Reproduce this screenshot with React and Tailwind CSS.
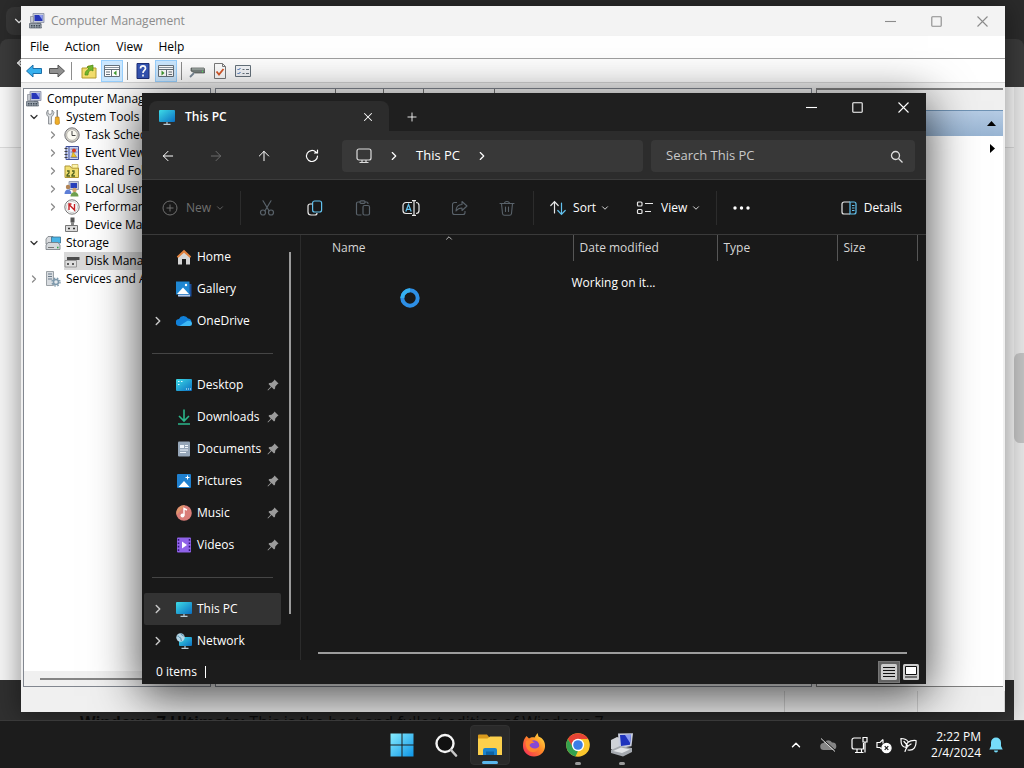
import React from "react";
import clsx from "clsx";
import {
  ArrowLeft,
  ArrowRight,
  ArrowUp,
  ChevronDown,
  ChevronRight,
  ChevronUp,
  Plus,
  X,
} from "lucide-react";

const treeItems = [
  { label: "Computer Management (Local)", icon: "computer", level: 0 },
  { label: "System Tools", icon: "tools", level: 1, state: "open" },
  { label: "Task Scheduler", icon: "clock", level: 2, state: "closed" },
  { label: "Event Viewer", icon: "event", level: 2, state: "closed" },
  { label: "Shared Folders", icon: "shared", level: 2, state: "closed" },
  { label: "Local Users and Groups", icon: "users", level: 2, state: "closed" },
  { label: "Performance", icon: "performance", level: 2, state: "closed" },
  { label: "Device Manager", icon: "device", level: 2 },
  { label: "Storage", icon: "storage", level: 1, state: "open" },
  { label: "Disk Management", icon: "disk", level: 2, selected: true },
  { label: "Services and Applications", icon: "services", level: 1, state: "closed" },
];

const navGroups = [
  [
    { label: "Home", icon: "home" },
    { label: "Gallery", icon: "gallery" },
    { label: "OneDrive", icon: "onedrive", expandable: true },
  ],
  [
    { label: "Desktop", icon: "desktop", pinned: true },
    { label: "Downloads", icon: "downloads", pinned: true },
    { label: "Documents", icon: "documents", pinned: true },
    { label: "Pictures", icon: "pictures", pinned: true },
    { label: "Music", icon: "music", pinned: true },
    { label: "Videos", icon: "videos", pinned: true },
  ],
  [
    { label: "This PC", icon: "pc", expandable: true, selected: true },
    { label: "Network", icon: "network", expandable: true },
  ],
];

const App = () => (
  <div className="flex flex-col h-screen overflow-hidden bg-[#1c1c1c] font-['Open_Sans','Noto_Sans',sans-serif] text-xs select-none">
    <main className="relative flex-1 min-h-0 overflow-hidden">
      <BrowserBackdrop />
      <ManagementWindow />
      <ExplorerWindow />
    </main>
    <Taskbar />
  </div>
);

// browser left open behind the two windows
const BrowserBackdrop = () => (
  <div className="flex flex-col h-full bg-[#2b2b2b]">
    <div className="flex items-end h-[39px] shrink-0 pb-1">
      <button aria-label="Search tabs" className="flex items-center justify-end w-8 h-7 ml-1.5 pr-3 rounded-lg bg-[#383838] text-white">
        <ChevronDown size={14} />
      </button>
    </div>
    <div className="flex items-center h-12 shrink-0 px-2 rounded-t-lg bg-[#3b3b3b] text-white">
      <ArrowLeft size={18} className="ml-1.5" />
    </div>
    <div className="flex flex-1 min-h-0">
      <div className="flex flex-col flex-1 min-w-0">
        <div className="h-[61px] shrink-0 bg-[#fbfbfb] border-b border-[#dddddd]" />
        <div className="flex-1 bg-[#f6f6f6]" />
        <div className="h-10 shrink-0 pt-[30px] pl-20 overflow-hidden bg-[#303030] text-[#0c0c0c] text-base whitespace-nowrap">
          <b>Windows 7 Ultimate:</b> This is the best and fullest edition of Windows 7
        </div>
      </div>
      <div className="w-2.5 pt-[266px] bg-[#e9e9e9]">
        <div className="h-[90px] rounded-l-md bg-[#c4c4c4]" />
      </div>
    </div>
  </div>
);

const WindowButtons = ({ size }) => (
  <div className="flex">
    {["Minimize", "Maximize", "Close"].map((name) => (
      <button key={name} aria-label={name} className={clsx("flex items-center justify-center w-[46px]", size)}>
        <svg width="11" height="11" viewBox="0 0 11 11" fill="none" stroke="currentColor" strokeWidth="1.1">
          {name === "Minimize" && <path d="M0 5.5h11" />}
          {name === "Maximize" && <rect x=".8" y=".8" width="9.4" height="9.4" rx=".8" />}
          {name === "Close" && <path d="M.5.5l10 10M10.5.5l-10 10" />}
        </svg>
      </button>
    ))}
  </div>
);

const ManagementWindow = () => (
  <section
    aria-label="Computer Management"
    className="absolute left-[21px] right-[19px] top-1.5 bottom-2 flex flex-col bg-[#f0f0f0] text-black shadow-[0_2px_24px_2px_#00000066] overflow-hidden"
  >
    <header className="flex items-center justify-between h-[30px] shrink-0 bg-[#f3f3f3] text-[#8b8b8b]">
      <div className="flex items-center gap-1.5 pl-2">
        <TreeIcon name="computer" />
        <h1>Computer Management</h1>
      </div>
      <WindowButtons size="h-[30px]" />
    </header>

    <nav className="flex h-[23px] shrink-0 pb-px pl-px bg-white border-b border-[#a0a0a0]">
      {["File", "Action", "View", "Help"].map((item) => (
        <button key={item} className="px-2">{item}</button>
      ))}
    </nav>

    <div className="flex items-center h-6 shrink-0 px-1 gap-1.5 bg-white border-b border-[#d5d5d5]">
      <ToolButton name="back" />
      <ToolButton name="forward" />
      <span className="w-px h-[18px] mr-0.5 bg-[#8d8d8d]" />
      <ToolButton name="folder" />
      <ToolButton name="treePane" active />
      <span className="w-px h-[18px] bg-[#8d8d8d]" />
      <ToolButton name="help" />
      <ToolButton name="actionPane" active />
      <span className="w-px h-[18px] bg-[#8d8d8d]" />
      <ToolButton name="drive" />
      <ToolButton name="check" />
      <ToolButton name="list" />
    </div>

    <div className="flex flex-1 min-h-0 pt-[5px] px-0.5 gap-1">
      <div className="flex flex-col w-[188px] shrink-0 bg-white border border-[#828790] overflow-hidden">
        <ul className="flex-1 pt-px">
          {treeItems.map((item) => (
            <TreeRow key={item.label} item={item} />
          ))}
        </ul>
        <div className="flex items-center h-[15px] pl-4 bg-[#f0f0f0]">
          <div className="flex-1 h-0.5 bg-[#858585]" />
        </div>
      </div>

      <div className="flex flex-col flex-1 min-w-0 bg-white border border-[#828790]">
        <div className="flex h-6 shrink-0 bg-[#f7f7f7]">
          <span className="w-[120px] border-r border-[#777777]" />
          <span className="w-12 border-r border-[#777777]" />
          <span className="w-10 border-r border-[#777777]" />
          <span className="w-[71px] border-r border-[#777777]" />
        </div>
      </div>

      <div className="flex flex-col w-[187px] shrink-0 bg-white border-t-2 border-l border-b border-[#828282]">
        <div className="h-5 shrink-0 bg-[#f0f0f0]" />
        <div className="flex items-center justify-end h-[26px] shrink-0 pr-[7px] border-t border-[#6f93b5] bg-linear-to-b from-[#b5cbe4] to-[#98b4d2]">
          <svg width="9" height="5" viewBox="0 0 9 5"><path d="M0 5L4.500 0 9 5z" /></svg>
        </div>
        <div className="flex items-center justify-end h-6 pr-2">
          <svg width="5" height="9" viewBox="0 0 5 9"><path d="M0 0l5 4.500L0 9z" /></svg>
        </div>
      </div>
    </div>

    <footer className="flex justify-end h-[25px] shrink-0 pt-1">
      <span className="w-[133px] border-l border-[#d0d0d0]" />
      <span className="w-[88px] border-x border-[#d0d0d0]" />
    </footer>
  </section>
);

const ToolButton = ({ name, active }) => (
  <button
    aria-label={name}
    className={clsx(
      "flex items-center justify-center h-[22px] shrink-0",
      active ? "w-[22px] -mx-0.5 bg-[#cce8ff] border border-[#99d1ff]" : "w-[17px]"
    )}
  >
    <ToolIcon name={name} />
  </button>
);

const ToolIcon = ({ name }) => (
  <svg width="16" height="16" viewBox="0 0 16 16" fill="none" className="shrink-0">
    {name === "back" && <path d="M.5 8L7 2v3.500h8.500v5H7V14z" fill="#36b0ee" stroke="#1d6fa8" />}
    {name === "forward" && <path d="M15.500 8L9 2v3.500H.5v5H9V14z" fill="#8f8f8f" stroke="#555" />}
    {name === "folder" && (
      <>
        <path d="M1 5h5l1-2h4l1 2h3v10H1z" fill="#f2dc6b" stroke="#b49a2d" />
        <path d="M4 12c0-4 2-5 4-6L6 4l6-2v6l-2-1c-2 1-3 2-3 5z" fill="#73b62c" stroke="#4b8a18" strokeWidth=".7" />
      </>
    )}
    {(name === "treePane" || name === "actionPane") && (
      <>
        <path d="M.5 2.500h15v11H.5z" fill="#fff" stroke="#66727c" />
        <path d="M1 4.500h14" stroke="#8a96a0" />
        <path d="M.5 6.500h15" stroke="#66727c" />
        {name === "treePane" ? (
          <>
            <path d="M7.500 7v6.500M2 9h4M2 11.500h4" stroke="#66727c" />
            <path d="M12.500 7.500v5L9.500 10z" fill="#3f9b2f" />
          </>
        ) : (
          <>
            <path d="M8.500 7v6.500M10.500 9H14M10.500 11.500H14" stroke="#66727c" />
            <path d="M3.500 7.500v5l3-2.500z" fill="#3f9b2f" />
          </>
        )}
      </>
    )}
    {name === "help" && (
      <>
        <path d="M2 .5h12v15H2z" fill="#3454b4" stroke="#1d2f78" />
        <path d="M5.500 5.500c0-3.500 5-3.500 5 0 0 2-2.500 2-2.500 4.500M8 11.500v2" stroke="#fff" strokeWidth="1.700" />
      </>
    )}
    {name === "drive" && (
      <>
        <path d="M2 5h13l.5 1v4H6L2 8z" fill="#78827f" stroke="#4a504e" strokeWidth=".7" />
        <path d="M3 5.500h12v1H3z" fill="#b7c0bd" />
        <path d="M13 8.500h1" stroke="#5bea62" strokeWidth="1.500" />
        <path d="M1 14l4-4" stroke="#7b8a99" strokeWidth="1.800" />
      </>
    )}
    {name === "check" && (
      <>
        <path d="M2.500.5h8l3 3v12h-11z" fill="#fff" stroke="#7b7b7b" />
        <path d="M10.500.5v3h3" stroke="#7b7b7b" />
        <path d="M4.500 8.500L7 11.500 11.500 6" stroke="#d8592a" strokeWidth="1.800" />
      </>
    )}
    {name === "list" && (
      <>
        <path d="M.5 2.500h15v11H.5z" fill="#f5f7fa" stroke="#66727c" />
        <path d="M2.500 6l1 1 2-2M2.500 10l1 1 2-2" stroke="#3a67b0" />
        <path d="M7.500 6.500h2M11 6.500h3M7.500 10.500h2M11 10.500h3" stroke="#66727c" />
      </>
    )}
  </svg>
);

const TreeRow = ({ item }) => (
  <li
    className={clsx(
      "flex items-center h-[18px] whitespace-nowrap",
      item.level === 0 && "pl-0.5",
      item.level === 1 && "pl-px",
      item.level === 2 && "pl-5"
    )}
  >
    {item.level > 0 && (
      <span className="flex justify-center w-5 shrink-0 pr-0.5">
        {item.state === "open" && <ChevronDown size={12} strokeWidth={2.5} className="text-[#333333]" />}
        {item.state === "closed" && <ChevronRight size={12} strokeWidth={2.5} className="text-[#8a8a8a]" />}
      </span>
    )}
    <span className={clsx("flex items-center gap-[5px] h-full", item.selected && "flex-1 bg-[#d9d9d9]")}>
      <TreeIcon name={item.icon} />
      {item.label}
    </span>
  </li>
);

const TreeIcon = ({ name }) => (
  <svg width="16" height="16" viewBox="0 0 16 16" fill="none" className="shrink-0">
    {name === "computer" && (
      <>
        <path d="M4 .5h11v9H4z" fill="#c6cbda" stroke="#868da5" strokeWidth=".8" />
        <path d="M5.500 2h8v6h-8z" fill="#2636b9" />
        <path d="M10 2h3.500v5z" fill="#8f9df0" />
        <path d="M8 9.500h4l1 3H8z" fill="#8b919c" />
        <path d="M1.500 3.500h3v6h-3z" fill="#c4c8cf" stroke="#858a93" strokeWidth=".7" />
        <path d="M.5 10.500h11l1 4.500H.5z" fill="#9aa3ad" stroke="#56606b" strokeWidth=".7" />
        <path d="M2 12.500h9M2 14h9" stroke="#3f4a55" strokeDasharray="1.500 1" />
      </>
    )}
    {name === "tools" && (
      <>
        <path d="M3 1v3.500l2 1 2-1V1l2 2.500-1 3-1.500 1V15h-3V7.500L2 6.500l-.5-3z" fill="#d7dadd" stroke="#7b8085" strokeWidth=".8" />
        <path d="M11.500 1h1.500v7h-1.500z" fill="#888" />
        <path d="M10.500 8h3.500l.5 6c0 2-4.500 2-4.500 0z" fill="#eeae28" stroke="#b47614" strokeWidth=".6" />
      </>
    )}
    {name === "clock" && (
      <>
        <circle cx="8" cy="8" r="7.200" fill="#d3d1ca" stroke="#77767a" />
        <circle cx="8" cy="8" r="5.300" fill="#fbfaf2" stroke="#a5a29a" strokeWidth=".6" />
        <path d="M8 4v4.500h3.500" stroke="#444" />
      </>
    )}
    {name === "event" && (
      <>
        <path d="M2 1.500h12.500v13H2z" fill="#cbd3ee" stroke="#40509c" />
        <path d="M5 1.500v13" stroke="#40509c" />
        <path d="M6.500 4h7M6.500 7h7M6.500 12.500h7" stroke="#7687c8" />
        <path d="M.5 3.500h3M.5 6.500h3M.5 9.500h3M.5 12.500h3" stroke="#444" />
        <circle cx="10" cy="5.500" r="2" fill="#d4391f" />
        <path d="M9 7l3.500 5h-5z" fill="#efc62c" stroke="#a98610" strokeWidth=".5" />
      </>
    )}
    {name === "shared" && (
      <>
        <path d="M1 3h5l1.500 2H14.500v9.500H1z" fill="#f1df72" stroke="#ae9636" />
        <path d="M8 1.500h6V5H8z" fill="#fff6a8" stroke="#ae9636" strokeWidth=".6" />
        <path d="M3 8h2v2l-2 2v1h3M8 8h2v2l-2 2v1h3" stroke="#4f6220" strokeWidth="1.300" />
      </>
    )}
    {name === "users" && (
      <>
        <path d="M5 .5h9.500v8H5z" fill="#c6cbda" stroke="#868da5" strokeWidth=".8" />
        <path d="M6.500 2h6.500v5H6.500z" fill="#2840bb" />
        <circle cx="4" cy="6" r="2.200" fill="#b28455" />
        <path d="M.5 13c0-6 7-6 7 0z" fill="#5d7ed6" />
        <circle cx="10.500" cy="9" r="2.200" fill="#d0a26e" />
        <path d="M6.500 15.500c0-6 8-6 8 0z" fill="#6fa04e" />
      </>
    )}
    {name === "performance" && (
      <>
        <circle cx="8" cy="8" r="7.200" fill="#fff" stroke="#777" />
        <circle cx="8" cy="8" r="5.500" stroke="#b8b8b8" strokeWidth=".7" />
        <path d="M5 11V5.500l5.500 5.500V5M4.500 5l3 0" stroke="#c42227" strokeWidth="1.400" />
      </>
    )}
    {name === "device" && (
      <>
        <path d="M6.500.5h4v5h-4z" fill="#555" />
        <path d="M8.500 5v4" stroke="#888" strokeWidth="3" />
        <path d="M1.500 8.500h12v6h-12z" fill="#ddd" stroke="#777" />
        <path d="M4 11.500h2M9 11.500h2" stroke="#333" strokeWidth="1.700" />
      </>
    )}
    {name === "storage" && (
      <>
        <path d="M1 4l2-2.500h5L9 4v5H1z" fill="#d8dadd" stroke="#777d84" strokeWidth=".8" />
        <path d="M6.500 2h9v6h-9z" fill="#48b4e6" stroke="#3a6e8e" strokeWidth=".8" />
        <path d="M1 10l2-2.500h10l2 2.500v4.500H1z" fill="#d3d7da" stroke="#71777e" strokeWidth=".8" />
        <path d="M3 12.500h6" stroke="#777" />
        <path d="M12 12.500h1.500" stroke="#2ba342" strokeWidth="1.500" />
      </>
    )}
    {name === "disk" && (
      <>
        <path d="M3 4h12.500v3H3z" fill="#4c4c4c" />
        <path d="M1 7.500h11.500v6.500H1z" fill="#dedede" stroke="#888" strokeWidth=".8" />
        <path d="M3 11h2M8 11h2" stroke="#333" strokeWidth="1.700" />
      </>
    )}
    {name === "services" && (
      <>
        <path d="M1.500.5h7v14h-7z" fill="#d8dce0" stroke="#878d93" strokeWidth=".8" />
        <path d="M3 3h4M3 5.500h4M3 8h4" stroke="#6a7a8a" />
        <circle cx="11" cy="11" r="2.500" fill="#e4e9ed" stroke="#7c98ab" strokeWidth="1.500" />
        <circle cx="11" cy="11" r="4" stroke="#7c98ab" strokeWidth="1.300" strokeDasharray="1.600 1.600" />
      </>
    )}
  </svg>
);

const ExplorerWindow = () => (
  <section
    aria-label="This PC"
    className="absolute z-10 left-[142px] right-[98px] top-[93px] bottom-9 flex flex-col bg-[#191919] text-white shadow-[0_10px_44px_2px_#000000b3]"
  >
    <header className="flex h-[38px] shrink-0 bg-[#1f1f1f]">
      <div className="flex items-center justify-between w-[240px] mt-2 ml-[7px] pt-0.5 pl-2.5 pr-3.5 rounded-t-lg bg-[#2c2c2c]">
        <div className="flex items-center gap-2.5 font-semibold">
          <PlaceIcon name="pc" />
          <h2>This PC</h2>
        </div>
        <button aria-label="Close tab"><X size={14} strokeWidth={1.75} /></button>
      </div>
      <button aria-label="New tab" className="px-4 pt-2.5"><Plus size={14} strokeWidth={1.5} /></button>
      <div className="flex-1" />
      <WindowButtons size="h-7" />
    </header>

    <div className="flex items-center h-[49px] shrink-0 pt-0.5 pl-0.5 pr-[11px] bg-[#2c2c2c] border-b border-[#3c3c3c]">
      <NavButton label="Back"><ArrowLeft size={16} strokeWidth={1.5} /></NavButton>
      <NavButton label="Forward" disabled><ArrowRight size={16} strokeWidth={1.5} /></NavButton>
      <NavButton label="Up"><ArrowUp size={16} strokeWidth={1.5} /></NavButton>
      <NavButton label="Refresh">
        <svg width="16" height="16" viewBox="0 0 16 16" fill="none" stroke="currentColor" strokeWidth="1.200" strokeLinecap="round">
          <path d="M13.500 8a5.500 5.500 0 1 1-1.700-4L13.500 5M13.500 2v3H10.500" />
        </svg>
      </NavButton>
      <div className="flex items-center flex-1 h-8 ml-1.5 mr-2 pl-3.5 rounded bg-[#383838] text-[13px]">
        <svg width="16" height="16" viewBox="0 0 16 16" fill="none" stroke="#dddddd" strokeWidth="1.200">
          <rect x="1" y="1" width="14" height="11" rx="2" />
          <path d="M3.500 14.500h9M6 12v2.500M10 12v2.500" />
        </svg>
        <ChevronRight size={14} className="mx-[15px]" />
        <a href="#this-pc">This PC</a>
        <ChevronRight size={14} className="ml-[15px]" />
      </div>
      <label className="flex items-center w-[264px] h-8 pl-[15px] pr-3 rounded bg-[#383838] text-[13px]">
        <input
          type="search"
          aria-label="Search This PC"
          placeholder="Search This PC"
          className="flex-1 min-w-0 bg-transparent outline-none placeholder:text-[#c8c8c8]"
        />
        <svg width="13" height="13" viewBox="0 0 13 13" fill="none" stroke="#dddddd" strokeWidth="1.300">
          <circle cx="5.500" cy="5.500" r="4" />
          <path d="M8.500 8.500l4 4" />
        </svg>
      </label>
    </div>

    <CommandBar />

    <div className="flex flex-1 min-h-0">
      <NavigationPane />
      <FileList />
    </div>

    <footer className="flex items-center justify-between h-6 shrink-0 pl-3.5 pr-1 bg-[#1c1c1c]">
      <div className="flex items-center gap-2">
        <span>0 items</span>
        <span className="w-px h-3 bg-white" />
      </div>
      <div className="flex items-center">
        <button aria-label="Details view" className="flex items-center justify-center w-[22px] h-[22px] bg-[#636363] border border-[#777777]">
          <svg width="16" height="16" viewBox="0 0 16 16" className="shrink-0">
            <rect width="16" height="16" rx="1.500" fill="#cdcdcd" />
            <path d="M2 3.500h12M2 6.500h12M2 9.500h12M2 12.500h12" stroke="#111" />
          </svg>
        </button>
        <button aria-label="Large thumbnails" className="flex items-center justify-center w-[22px] h-[22px]">
          <svg width="16" height="16" viewBox="0 0 16 16" className="shrink-0">
            <rect width="16" height="16" rx="1.500" fill="#cdcdcd" />
            <path d="M2.500 2.500h11v8h-11z" fill="#fff" stroke="#111" />
            <path d="M2 13h12" stroke="#111" />
          </svg>
        </button>
      </div>
    </footer>
  </section>
);

const NavButton = ({ label, disabled, children }) => (
  <button
    aria-label={label}
    disabled={disabled}
    className={clsx("flex items-center justify-center w-12 h-8", disabled && "text-[#6b6b6b]")}
  >
    {children}
  </button>
);

const CommandBar = () => (
  <div className="flex items-center h-[55px] shrink-0 pt-0.5 px-1.5 border-b border-[#3a3a3a]">
    <button disabled className="flex items-center h-8 pl-3.5 text-[#6f6f6f]">
      <svg width="16" height="16" viewBox="0 0 16 16" fill="none" stroke="currentColor">
        <circle cx="8" cy="8" r="7" />
        <path d="M8 4.500v7M4.500 8h7" />
      </svg>
      <span className="ml-2 mr-1">New</span>
      <ChevronDown size={10} />
    </button>
    <Divider className="ml-[15px]" />
    <CommandIcon label="Cut" disabled>
      <svg width="16" height="16" viewBox="0 0 16 16" fill="none" stroke="currentColor" strokeWidth="1.200" strokeLinecap="round">
        <path d="M4 .8l6 10M12 .8l-6 10" />
        <circle cx="4" cy="12.500" r="2.500" />
        <circle cx="12" cy="12.500" r="2.500" />
      </svg>
    </CommandIcon>
    <CommandIcon label="Copy">
      <svg width="16" height="16" viewBox="0 0 16 16" fill="none" strokeWidth="1.200">
        <path d="M5 4H3a2 2 0 0 0-2 2v6a3 3 0 0 0 3 3h4a2 2 0 0 0 2-2" stroke="#e8e8e8" />
        <rect x="5.600" y="1" width="9" height="11" rx="2" stroke="#62c1ee" />
      </svg>
    </CommandIcon>
    <CommandIcon label="Paste" disabled>
      <svg width="16" height="16" viewBox="0 0 16 16" fill="none" stroke="currentColor" strokeWidth="1.200">
        <path d="M5 2H3a1.500 1.500 0 0 0-1.500 1.500v10A1.500 1.500 0 0 0 3 15h3.500M10 2h1.500A1.500 1.500 0 0 1 13 3.500V4" />
        <rect x="5" y=".8" width="5" height="2.500" rx="1" />
        <rect x="8" y="5.500" width="6.500" height="9.500" rx="1.500" />
      </svg>
    </CommandIcon>
    <CommandIcon label="Rename">
      <svg width="18" height="16" viewBox="0 0 18 16" fill="none" strokeWidth="1.200">
        <path d="M10 2.500H4a3 3 0 0 0-3 3v5a3 3 0 0 0 3 3h6M14 2.500a3 3 0 0 1 3 3v5a3 3 0 0 1-3 3M10 .7h4M12 .7v14.600M10 15.300h4" stroke="#e8e8e8" />
        <path d="M3.800 11.500L6.500 4.500l2.700 7M4.800 9.300h3.500" stroke="#62c1ee" />
      </svg>
    </CommandIcon>
    <CommandIcon label="Share" disabled>
      <svg width="17" height="16" viewBox="0 0 17 16" fill="none" stroke="currentColor" strokeWidth="1.100" strokeLinejoin="round">
        <path d="M6 2.500H3.500a2 2 0 0 0-2 2v8a2 2 0 0 0 2 2h8.500a2 2 0 0 0 2-2V11" />
        <path d="M11 1.500l5 4.500-5 4.500V8C8 8 6.500 9 5 11c0-4 2-6.500 6-6.500z" />
      </svg>
    </CommandIcon>
    <CommandIcon label="Delete" disabled>
      <svg width="16" height="16" viewBox="0 0 16 16" fill="none" stroke="currentColor" strokeWidth="1.100" strokeLinecap="round">
        <path d="M1 3.500h14M5.500 3.500a2.500 2 0 0 1 5 0M2.500 3.500l1 10a2 2 0 0 0 2 1.700h5a2 2 0 0 0 2-1.700l1-10M6.500 7v4.500M9.500 7v4.500" />
      </svg>
    </CommandIcon>
    <Divider className="ml-1" />
    <button className="flex items-center h-8 ml-4">
      <svg width="16" height="16" viewBox="0 0 16 16" fill="none" strokeWidth="1.200" strokeLinecap="round">
        <path d="M4.500 13V2M.8 5.500L4.500 1.700l3.700 3.800" stroke="#e8e8e8" />
        <path d="M11.500 3v11M7.800 10.500l3.700 3.800 3.700-3.800" stroke="#62c1ee" />
      </svg>
      <span className="ml-[7px] mr-1">Sort</span>
      <ChevronDown size={10} />
    </button>
    <button className="flex items-center h-8 ml-[26px]">
      <svg width="18" height="16" viewBox="0 0 18 16" fill="none" stroke="#e8e8e8" strokeWidth="1.200">
        <rect x="1.500" y="2" width="4.500" height="4" rx="1" />
        <rect x="1.500" y="9.500" width="4.500" height="4" rx="1" />
        <path d="M9 3.500h8M9 11.500h6" />
      </svg>
      <span className="ml-[7px] mr-1">View</span>
      <ChevronDown size={10} />
    </button>
    <Divider className="ml-[15px]" />
    <button aria-label="See more" className="flex items-center justify-center w-12 h-8">
      <svg width="17" height="4" viewBox="0 0 17 4" fill="currentColor">
        <circle cx="2" cy="2" r="1.700" />
        <circle cx="8.500" cy="2" r="1.700" />
        <circle cx="15" cy="2" r="1.700" />
      </svg>
    </button>
    <button className="flex items-center gap-[7px] h-8 ml-auto pr-[18px]">
      <svg width="16" height="14" viewBox="0 0 16 14" fill="none" strokeWidth="1.200">
        <path d="M9 1H3a2 2 0 0 0-2 2v8a2 2 0 0 0 2 2h6" stroke="#e8e8e8" />
        <path d="M9 1h4a2 2 0 0 1 2 2v8a2 2 0 0 1-2 2H9zM11 4.500h2.500M11 7h2.500M11 9.500h2.500" stroke="#62c1ee" />
      </svg>
      Details
    </button>
  </div>
);

const CommandIcon = ({ label, disabled, children }) => (
  <button
    aria-label={label}
    disabled={disabled}
    className={clsx("flex items-center justify-center w-12 h-8 pl-1", disabled && "text-[#59626a]")}
  >
    {children}
  </button>
);

const Divider = ({ className }) => <span className={clsx("w-px h-[34px] bg-[#2c2c2c]", className)} />;

const NavigationPane = () => (
  <aside className="flex w-[159px] shrink-0 border-r border-[#2b2b2b]">
    <nav className="flex-1 pt-1.5 pl-0.5">
      {navGroups.map((group, i) => (
        <React.Fragment key={i}>
          {i > 0 && (
            <div className="flex items-center h-8 pl-2 pr-2">
              <hr className="flex-1 border-[#454545]" />
            </div>
          )}
          <ul>
            {group.map((item) => (
              <li key={item.label}>
                <a
                  href={`#${item.label}`}
                  className={clsx("flex items-center h-8 pr-0.5 rounded-xs", item.selected && "bg-[#333333]")}
                >
                  <span className="w-8 pl-[7px]">
                    {item.expandable && <ChevronRight size={14} strokeWidth={2.5} className="text-[#c8c8c8]" />}
                  </span>
                  <PlaceIcon name={item.icon} />
                  <span className="flex-1 pl-[5px]">{item.label}</span>
                  {item.pinned && <PinIcon />}
                </a>
              </li>
            ))}
          </ul>
        </React.Fragment>
      ))}
    </nav>
    <div className="w-[19px] pl-2 pt-[17px]">
      <div className="w-0.5 h-[362px] bg-[#9b9b9b]" />
    </div>
  </aside>
);

const PinIcon = () => (
  <svg width="12" height="12" viewBox="0 0 12 12" fill="#9b9b9b" className="shrink-0">
    <path d="M7.500.5l4 4-1.200.8-2 2.200-.3 2.200-1 .8-2.400-2.400L1 11.500l-.5-.5 3.300-3.600L1.500 5l.8-1 2.300-.3 2.200-2z" />
  </svg>
);

const PlaceIcon = ({ name }) => (
  <svg width="16" height="16" viewBox="0 0 16 16" fill="none" className="shrink-0">
    <defs>
      <linearGradient id="screen" x1="0" y1="0" x2="1" y2="1">
        <stop offset="0" stopColor="#3ddbe6" />
        <stop offset="1" stopColor="#0b6fc2" />
      </linearGradient>
    </defs>
    {name === "home" && (
      <>
        <path d="M2 7l6-5 6 5v8.500h-4V10H6v5.500H2z" fill="#d5d5d5" />
        <path d="M8 .8L.8 7.500 2 9l6-5.300L14 9l1.200-1.500z" fill="#e0803c" />
      </>
    )}
    {name === "gallery" && (
      <>
        <path d="M3 3h12.500v12.500H3z" fill="#1b4f9c" />
        <path d="M2 13.500h12v2H2z" fill="#b6cbe8" />
        <path d="M0 .5h13.500v13H0z" fill="#1f87d2" />
        <path d="M1 13l6-6.500 6 6.500z" fill="#fff" />
        <circle cx="10" cy="4" r="1.200" fill="#fff" />
      </>
    )}
    {name === "onedrive" && (
      <>
        <path d="M3.500 13a3.500 3.500 0 0 1-.5-7A5 5 0 0 1 12 5.500a3.800 3.800 0 0 1 .5 7.500z" fill="#1180d8" />
        <path d="M3.500 13L11 8c2.500-1 5 .5 5 2.500A2.500 2.500 0 0 1 13.500 13z" fill="#3db8f5" />
      </>
    )}
    {name === "desktop" && (
      <>
        <rect y="2" width="16" height="12" rx="1" fill="url(#screen)" />
        <path d="M2 4.500h1.500M2 7.500h1.500M5 4.500h1.500M10 12h1M12 12h1M14 12h1" stroke="#e3fbff" />
      </>
    )}
    {name === "downloads" && <path d="M8 .5v11M3 7l5 5 5-5M2 15h12" stroke="#2bb58a" strokeWidth="1.600" />}
    {name === "documents" && (
      <>
        <rect x="2" y=".5" width="12" height="15" rx="1" fill="#96a6b8" />
        <path d="M4 4h4v3H4z" fill="#eef4fa" />
        <path d="M9 4.500h3M9 6.500h3M4 9h8M4 11.500h6" stroke="#eef4fa" />
      </>
    )}
    {name === "pictures" && (
      <>
        <rect x="1" y="1" width="14" height="14" rx="1" fill="#1f80cf" />
        <path d="M2.500 14L8 8l5.500 6z" fill="#fff" />
        <path d="M11.500 2.500v4M9.500 4.500h4" stroke="#fff" />
      </>
    )}
    {name === "music" && (
      <>
        <circle cx="8" cy="8" r="7.800" fill="#d97d78" />
        <path d="M.6 10A7.800 7.800 0 0 1 9 .3z" fill="#e0956c" />
        <circle cx="6.500" cy="10.500" r="2" fill="#fff" />
        <path d="M8 10.500V3.500l3 1.500" stroke="#fff" strokeWidth="1.400" />
      </>
    )}
    {name === "videos" && (
      <>
        <rect x="1" y=".5" width="14" height="15" rx="1" fill="#8f62e8" />
        <path d="M2.500 2v13M13.500 2v13" stroke="#331478" strokeWidth="1.500" strokeDasharray="1.700 1.700" />
        <path d="M6 4.500v7L11 8z" fill="#fff" />
      </>
    )}
    {name === "pc" && (
      <>
        <rect y="1" width="16" height="12" rx="1" fill="url(#screen)" />
        <path d="M8 13v2M4.500 15.300h7" stroke="#b9cbd6" strokeWidth="1.200" />
      </>
    )}
    {name === "network" && (
      <>
        <rect x="3" y="4" width="13" height="9" rx="1" fill="url(#screen)" />
        <path d="M9 13v2M5.500 15.300h7" stroke="#b9cbd6" strokeWidth="1.200" />
        <circle cx="4.500" cy="4.500" r="4.200" fill="#b5d6e6" />
        <path d="M1.500 3c2 0 2 2 3 2s0 2 1 3M5 .5c0 2 2 1 3 3" stroke="#4b87a4" />
      </>
    )}
  </svg>
);

const FileList = () => (
  <div className="flex flex-col flex-1 min-w-0">
    <table className="w-full table-fixed text-left text-[#d6d6d6]">
      <thead>
        <tr className="h-[26px]">
          <th className="relative pl-[31px] font-normal border-r border-[#565656]">
            Name
            <ChevronUp size={10} className="absolute top-[-2px] left-[143px]" />
          </th>
          <th className="w-36 pl-1.5 font-normal border-r border-[#565656]">Date modified</th>
          <th className="w-[120px] pl-1.5 font-normal border-r border-[#565656]">Type</th>
          <th className="w-20 pl-1.5 font-normal border-r border-[#565656]">Size</th>
          <th className="w-[9px]" aria-label="Spacer" />
        </tr>
      </thead>
    </table>
    <div className="flex-1 pt-3.5 text-center">
      <p>Working on it...</p>
      <svg width="20" height="20" viewBox="0 0 20 20" fill="none" className="ml-[99px] -mt-[3px]">
        <circle cx="10" cy="10" r="7.700" stroke="#2d8fe6" strokeWidth="4" />
        <path d="M2.300 10A7.700 7.700 0 0 1 10 2.300" stroke="#35b0f0" strokeWidth="4" />
      </svg>
    </div>
    <div className="h-0.5 ml-[17px] mr-[19px] mb-1.5 bg-[#9b9b9b]" />
  </div>
);

const Taskbar = () => (
  <footer className="grid grid-cols-[1fr_auto_1fr] items-center h-12 shrink-0 border-t border-[#393939] bg-[#1c1c1c] text-white">
    <span />
    <div className="flex gap-1">
      {["start", "search", "explorer", "firefox", "chrome", "management"].map((name) => (
        <button
          key={name}
          aria-label={name}
          className={clsx(
            "relative flex items-center justify-center w-10 h-10 rounded",
            name === "explorer" && "bg-[#2a2a2a] border border-[#313131]"
          )}
        >
          <TaskIcon name={name} />
          {name === "explorer" && <span className="absolute bottom-0 w-4 h-[3px] rounded-full bg-[#5ab6ec]" />}
          {(name === "chrome" || name === "management") && (
            <span className="absolute bottom-0 w-1.5 h-[3px] rounded-full bg-[#9a9a9a]" />
          )}
        </button>
      ))}
    </div>
    <div className="flex items-center justify-end pr-[21px]">
      <button aria-label="Show hidden icons" className="mr-4"><ChevronUp size={14} strokeWidth={2.5} /></button>
      <svg width="18" height="16" viewBox="0 0 18 16" fill="none" className="mr-3.5">
        <path d="M5 13a3.500 3.500 0 0 1-.5-7A5 5 0 0 1 13 5.500 3.700 3.700 0 0 1 14 13z" fill="#858585" />
        <path d="M3 1.500l13 11.500" stroke="#1c1c1c" />
        <path d="M2 1.500l14 13" stroke="#ddd" />
      </svg>
      <button aria-label="Network, volume and battery" className="flex gap-2 mr-3.5">
        <svg width="17" height="18" viewBox="0 0 17 18" fill="none" stroke="#fff" strokeWidth="1.200">
          <path d="M10 2H3a2 2 0 0 0-2 2v7a2 2 0 0 0 2 2h9.500V7M4 16.500h8.500M6 13v3.500M10.500 13v3.500" />
          <path d="M12 1.500h4V6h-4zM14 6v10.500" />
        </svg>
        <svg width="16" height="18" viewBox="0 0 16 18" fill="none" stroke="#fff" strokeWidth="1.200">
          <path d="M7 3.500L4 6.500H1v5h3l1.500 1.500M7 3.500v4" />
          <circle cx="10.500" cy="12" r="4.600" fill="#fff" />
          <path d="M8.700 10.200l3.600 3.600M12.300 10.200l-3.600 3.600" stroke="#1c1c1c" />
        </svg>
        <svg width="17" height="18" viewBox="0 0 17 18" fill="none" stroke="#fff" strokeWidth="1.200" strokeLinecap="round">
          <path d="M6 11.500C2 11.500.8 8 1 2.500c3.500 0 5.500 1 7 3M6.500 12.500C5 7 9 4 16 4.500c.5 6-2 10.500-8 9.500M5 15.500c1-3.500 3-6 6-7.500M4 5.500l3.500 4" />
        </svg>
      </button>
      <div className="mr-2 text-right leading-4">
        <p>2:22 PM</p>
        <p>2/4/2024</p>
      </div>
      <button aria-label="Notifications">
        <svg width="14" height="16" viewBox="0 0 14 16" fill="#76dcf9">
          <path d="M7 .5a5 5 0 0 1 5 5v3.500l1.700 3.500H.3L2 9V5.500a5 5 0 0 1 5-5zM5 13.500h4a2 2 0 0 1-4 0z" />
        </svg>
      </button>
    </div>
  </footer>
);

const TaskIcon = ({ name }) => (
  <svg width="24" height="24" viewBox="0 0 24 24" fill="none" className="shrink-0">
    <defs>
      <linearGradient id="start" x1="0" y1="0" x2="24" y2="24" gradientUnits="userSpaceOnUse">
        <stop offset="0" stopColor="#8befff" />
        <stop offset="1" stopColor="#0a93e6" />
      </linearGradient>
      <linearGradient id="fire" x1="1" y1="0" x2="0" y2="1">
        <stop offset="0" stopColor="#fff14a" />
        <stop offset=".45" stopColor="#ff8a26" />
        <stop offset="1" stopColor="#f5205f" />
      </linearGradient>
    </defs>
    {name === "start" && <path d="M.5.500h11v11H.5zM12.500.500h11v11h-11zM.5 12.500h11v11H.5zM12.500 12.500h11v11h-11z" fill="url(#start)" />}
    {name === "search" && (
      <>
        <circle cx="11" cy="10.500" r="8.500" fill="#111" stroke="#f5f5f5" strokeWidth="2.400" />
        <path d="M17 17l5 5.500" stroke="#c8c8c8" strokeWidth="2.600" strokeLinecap="round" />
      </>
    )}
    {name === "explorer" && (
      <>
        <path d="M0 2.500a1 1 0 0 1 1-1h8l2 2.500v4H0z" fill="#d99a1c" />
        <path d="M0 5.500h9.500L12 3.500h11a1 1 0 0 1 1 1v17.500H0z" fill="#fcd04c" />
        <path d="M5 22v-5a2 2 0 0 1 2-2h10a2 2 0 0 1 2 2v5z" fill="#1c83cc" />
        <path d="M8 18.500h8V22H8z" fill="#0e63a5" />
      </>
    )}
    {name === "firefox" && (
      <>
        <path d="M3 5l1.500-2L7 5.500C9 4 11 4 12.500 4.500L15.500 0l1 3.500C21 5 23.500 9 23 14c-.6 5.500-5 9.500-11 9.500S1 19 1 13c0-3 .5-6 2-8z" fill="url(#fire)" />
        <circle cx="12" cy="12.500" r="5.200" fill="#8748d4" />
        <path d="M4 8c4-2 7 0 9 2-3-.5-4 .5-5.500 2 1 4 7 5 10 1-1 6-7 8-11 4.500C4 15 3 11 4 8z" fill="#ff852f" />
      </>
    )}
    {name === "chrome" && (
      <>
        <circle cx="12" cy="12" r="11.800" fill="#fbc62d" />
        <path d="M1.800 6A11.800 11.800 0 0 1 22.200 6H12L7 15z" fill="#e64335" />
        <path d="M1.800 6L7.500 15l4.500 3-2.500 5.500A11.800 11.800 0 0 1 1.800 6z" fill="#34a14f" />
        <circle cx="12" cy="12" r="6.200" fill="#fff" />
        <circle cx="12" cy="12" r="4.800" fill="#3b7de5" />
      </>
    )}
    {name === "management" && (
      <>
        <path d="M1 7l6-3 3 1v11l-6 2-3-2z" fill="#cfd2d7" />
        <path d="M8 .5l15-.2-1.500 13L9 15z" fill="#c9cede" />
        <path d="M10 2l11-.3-1 10L11 13z" fill="#1f33bd" />
        <path d="M15 2l6-.3-1 8z" fill="#8b9bf0" />
        <path d="M1 17l9-4 12 2v4l-9 4.500L1 20z" fill="#a5a9af" />
        <path d="M3 18l8-3.500 9 2-8 3.500z" fill="#e2e4e7" />
      </>
    )}
  </svg>
);

export default App;
